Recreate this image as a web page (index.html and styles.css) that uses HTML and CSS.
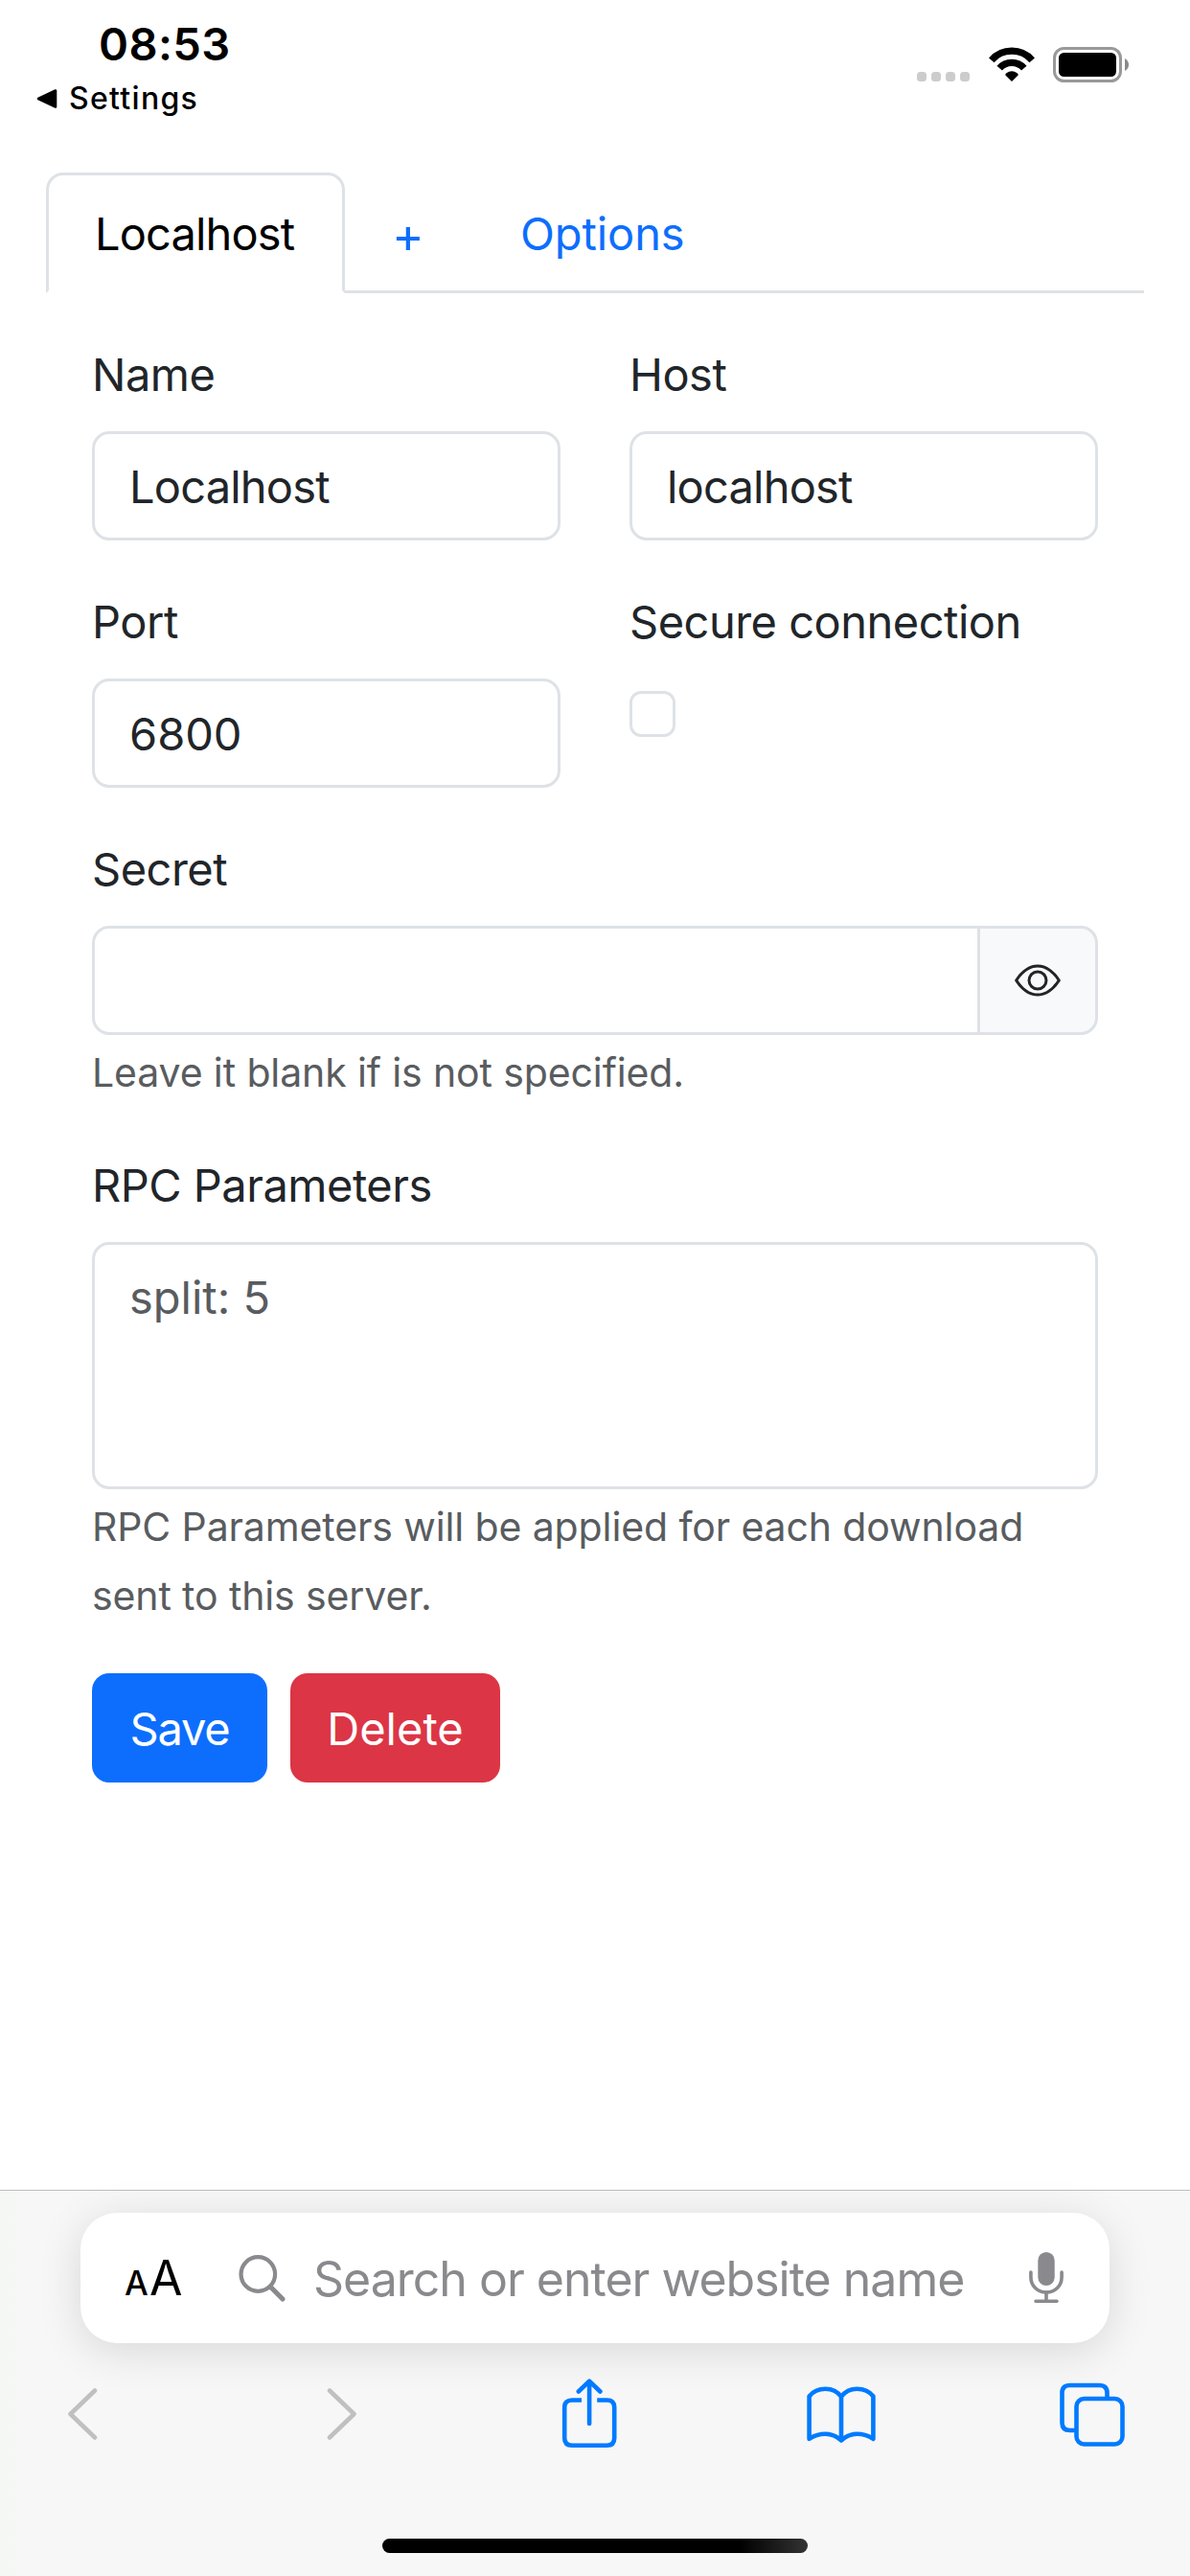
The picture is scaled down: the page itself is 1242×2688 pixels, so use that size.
FILE: index.html
```html
<!DOCTYPE html>
<html lang="en">
<head>
<meta charset="utf-8">
<title>Server options</title>
<link rel="stylesheet" href="styles.css">
</head>
<body>
<div class="screen">
  <header class="status">
    <div class="status-left">
      <div class="time">08:53</div>
      <div class="back">
        <svg class="back-arrow" viewBox="0 0 22 22"><path d="M2 11 L20 2.5 V19.5 Z" fill="#000" stroke="#000" stroke-width="2.6" stroke-linejoin="round"/></svg>
        <span>Settings</span>
      </div>
    </div>
    <div class="status-right">
      <div class="signal"><i></i><i></i><i></i><i></i></div>
      <svg class="wifi" viewBox="0 0 48 37">
        <g fill="none" stroke="#000" stroke-width="7.3">
          <path d="M2.8 13.8 A28.2 28.2 0 0 1 45.2 13.8"/>
          <path d="M11.2 22.2 A17 17 0 0 1 36.8 22.2"/>
        </g>
        <path d="M24 36 L17.2 29.2 Q17.2 28 18.4 27.2 Q24 23.4 29.6 27.2 Q30.8 28 30.8 29.2 Z"/>
      </svg>
      <svg class="battery" viewBox="0 0 80 37">
        <rect x="1.5" y="1.5" width="69" height="34" rx="10" fill="none" stroke="#999" stroke-width="3"/>
        <rect x="6" y="6" width="60" height="25" rx="5.5"/>
        <path d="M75 12 Q79 14.5 79 18.5 Q79 22.5 75 25 Z" fill="#8a8a8a"/>
      </svg>
    </div>
  </header>

  <main class="page">
    <nav class="tabs">
      <a class="tab active">Localhost</a>
      <a class="tab plus">+</a>
      <a class="tab options">Options</a>
    </nav>

    <form class="form">
      <div class="row">
        <div class="field">
          <label>Name</label>
          <div class="input tight">Localhost</div>
        </div>
        <div class="field">
          <label>Host</label>
          <div class="input tight">localhost</div>
        </div>
      </div>
      <div class="row">
        <div class="field">
          <label>Port</label>
          <div class="input digits">6800</div>
        </div>
        <div class="field">
          <label>Secure connection</label>
          <div class="check"></div>
        </div>
      </div>
      <div class="field">
        <label>Secret</label>
        <div class="group">
          <div class="input"></div>
          <div class="eye">
            <svg viewBox="0 0 16 16" fill="#212529"><path d="M16 8s-3-5.500-8-5.500S0 8 0 8s3 5.500 8 5.500S16 8 16 8M1.173 8a13 13 0 0 1 1.660-2.043C4.120 4.668 5.880 3.500 8 3.500s3.879 1.168 5.168 2.457A13 13 0 0 1 14.828 8q-.086.130-.195.288c-.335.480-.830 1.120-1.465 1.755C11.879 11.332 10.119 12.500 8 12.500s-3.879-1.168-5.168-2.457A13 13 0 0 1 1.172 8z"/><path d="M8 5.500a2.500 2.500 0 1 0 0 5 2.500 2.500 0 0 0 0-5M4.500 8a3.500 3.500 0 1 1 7 0 3.500 3.500 0 0 1-7 0"/></svg>
          </div>
        </div>
        <div class="help">Leave it blank if is not specified.</div>
      </div>
      <div class="field">
        <label>RPC Parameters</label>
        <div class="input area">split: 5</div>
        <div class="help">RPC Parameters will be applied for each download<br>sent to this server.</div>
      </div>
      <div class="buttons">
        <div class="btn save">Save</div>
        <div class="btn delete">Delete</div>
      </div>
    </form>
  </main>

  <footer class="browser">
    <div class="address">
      <div class="aa"><span class="aa-small">A</span><span class="aa-big">A</span></div>
      <svg class="glass" viewBox="0 0 50 50"><g fill="none" stroke="#8a8a8e" stroke-linecap="round"><circle cx="20.3" cy="20" r="17.8" stroke-width="4.2"/><path d="M33.500 33.500 L46 46" stroke-width="5.200"/></g></svg>
      <span class="hint">Search or enter website name</span>
      <svg class="mic" viewBox="0 0 36 54"><rect x="9.3" y="0" width="17.4" height="35" rx="8.7" fill="#8a8a8e"/><g fill="none" stroke="#8a8a8e" stroke-width="3.6" stroke-linecap="round"><path d="M1.900 21 V26 C1.900 35.500 9 42 18 42 C27 42 34.100 35.500 34.100 26 V21"/><path d="M18 42 V51 M7 51.200 H29"/></g></svg>
    </div>
    <div class="tools">
      <svg class="t-back" viewBox="0 0 32 56"><path d="M29 3.5 L3.5 28 L29 52.5"/></svg>
      <svg class="t-fwd" viewBox="0 0 32 56"><path d="M3 3.5 L28.5 28 L3 52.5"/></svg>
      <svg class="t-share" viewBox="0 0 58 74"><path class="butt" d="M21 22.500 H11 Q3.200 22.500 3.200 30 V62 Q3.200 69.700 11 69.700 H47.500 Q55.200 69.700 55.200 62 V30 Q55.200 22.500 47.500 22.500 H37.200"/><path d="M29.100 47 V3 M17.800 13.500 L29.100 2.600 L40.400 13.500"/></svg>
      <svg class="t-book" viewBox="0 0 72 62"><path d="M36 56.500 V11 C32 5.500 26 2.800 19.500 2.800 C13 2.800 6.500 5.500 2.600 10.500 V55 C7.500 51.500 13 49.800 19.500 49.800 C26 49.800 31 52 36 56.500 C41 52 46 49.800 52.500 49.800 C59 49.800 64.500 51.500 69.400 55 V10.500 C65.500 5.500 59 2.800 52.500 2.800 C46 2.800 40 5.500 36 11"/></svg>
      <svg class="t-tabs" viewBox="0 0 68 68"><path d="M49.500 15 V11 Q49.500 3 41.500 3 H10.500 Q2.500 3 2.500 11 V42 Q2.500 50 10.500 50 H15"/><rect x="17.500" y="17" width="48" height="47.500" rx="8"/></svg>
    </div>
    <div class="home"></div>
  </footer>
</div>
</body>
</html>
```
FILE: styles.css
```css
* { box-sizing: border-box; }

body {
  margin: 0;
  background: #fff;
  color: #212529;
  font: 47px/72px Inter, "Liberation Sans", sans-serif;
  letter-spacing: -0.5px;
}

svg { display: block; flex: none; }

.screen {
  display: flex;
  flex-direction: column;
  width: 1242px;
  height: 2688px;
  overflow: hidden;
}

/* Status bar */
.status {
  display: flex;
  justify-content: space-between;
  height: 180px;
  color: #000;
}
.status-left { padding: 20px 0 0 38px; }
.time {
  padding-left: 65px;
  font-weight: 600;
  line-height: 52px;
  letter-spacing: 0.4px;
}
.back {
  display: flex;
  align-items: center;
  gap: 12px;
  margin-top: 11px;
  font-size: 32px;
  font-weight: 500;
  line-height: 40px;
  letter-spacing: 1.3px;
}
.back-arrow { width: 22px; height: 22px; }
.status-right {
  display: flex;
  align-items: flex-start;
  padding: 49px 63px 0 0;
}
.signal { display: flex; gap: 5px; padding-top: 26px; margin-right: 20px; }
.signal i { width: 10px; height: 10px; border-radius: 3.5px; background: #ccc; }
.wifi { width: 48px; height: 37px; margin-right: 19px; }
.battery { width: 80px; height: 37px; }

/* Tabs */
.page { flex: 1; padding: 0 48px; }
.tabs {
  display: flex;
  height: 126px;
  border-bottom: 3px solid #dee2e6;
}
.tab {
  height: 126px;
  padding: 25px 48px 0;
  border: 3px solid transparent;
  border-radius: 18px 18px 0 0;
  color: #0d6efd;
}
.tab.active {
  width: 312px;
  border-color: #dee2e6 #dee2e6 #fff;
  background: #fff;
  color: #000;
  letter-spacing: -0.85px;
}
.tab.plus { width: 132px; padding: 27px 0 0 46px; font-size: 51px; }
.tab.options { letter-spacing: -0.1px; }

/* Form */
.form { display: flex; flex-direction: column; gap: 48px; padding: 48px 48px 0; }
.row { display: grid; grid-template-columns: 1fr 1fr; gap: 72px; }
.field { min-width: 0; }
.field label { display: block; padding-top: 1px; margin-bottom: 23px; }
.input {
  height: 114px;
  padding: 19px 36px 0;
  border: 3px solid #dee2e6;
  border-radius: 18px;
  background: #fff;
}
.input.tight { letter-spacing: -0.8px; }
.input.digits { letter-spacing: 0; }
.input.area { height: 258px; color: #595c5f; letter-spacing: 0; }
.check {
  width: 48px;
  height: 48px;
  margin-top: 36px;
  border: 3px solid #dee2e6;
  border-radius: 12px;
}
.group { display: flex; }
.group .input { flex: 1; border-radius: 18px 0 0 18px; }
.eye {
  width: 126px;
  height: 114px;
  margin-left: -3px;
  padding: 30px 36px;
  border: 3px solid #dee2e6;
  border-radius: 0 18px 18px 0;
  background: #f8f9fa;
}
.eye svg { width: 48px; height: 48px; }
.help {
  padding-top: 3px;
  margin-bottom: -3px;
  color: #595c5f;
  font-size: 41px;
  letter-spacing: -0.12px;
}
.buttons { display: flex; gap: 24px; }
.btn {
  height: 114px;
  padding-top: 22px;
  border-radius: 18px;
  color: #fff;
  text-align: center;
}
.save { width: 183px; background: #0d6efd; letter-spacing: -1.2px; }
.delete { width: 219px; background: #dc3545; letter-spacing: 0; }

/* Browser toolbar */
.browser {
  display: flex;
  flex-direction: column;
  height: 403px;
  border-top: 1px solid #bcbebc;
  background: linear-gradient(90deg, #f5f7f5 0, #f7f7f7 60px, #f7f7f7 100%);
}
.address {
  display: flex;
  align-items: center;
  width: 1074px;
  height: 136px;
  margin: 23px 0 0 84px;
  padding: 0 48px 0 46px;
  border-radius: 38px;
  background: #fff;
  box-shadow: 0 8px 45px rgba(0, 0, 0, 0.13);
}
.aa {
  display: flex;
  align-items: baseline;
  width: 119px;
  padding-top: 4px;
  color: #000;
  letter-spacing: 0;
}
.aa-small { width: 26px; font-size: 35px; font-weight: 500; }
.aa-big { font-size: 50px; }
.glass { width: 50px; height: 50px; margin-top: 2px; }
.hint {
  flex: 1;
  padding-top: 2px;
  margin-left: 28px;
  color: #8a8a8e;
  font-size: 50px;
  letter-spacing: -1px;
  white-space: nowrap;
}
.mic { width: 36px; height: 54px; }

.tools {
  display: flex;
  align-items: center;
  height: 74px;
  margin: 37px 0 0 70px;
}
.tools svg {
  fill: none;
  stroke: #007aff;
  stroke-width: 4.6;
  stroke-linecap: round;
  stroke-linejoin: round;
}
.tools .butt { stroke-linecap: butt; }
.tools .t-back, .tools .t-fwd { width: 32px; height: 56px; stroke: #c0c0c0; }
.t-fwd { margin-left: 239px; }
.t-share { width: 58px; height: 74px; margin-left: 213px; }
.t-book { width: 72px; height: 62px; margin: 3px 0 0 198px; }
.t-tabs { width: 68px; height: 68px; margin: 1px 0 0 192px; }
.home {
  width: 444px;
  height: 15px;
  margin: 93px auto 0;
  border-radius: 8px;
  background: linear-gradient(90deg, #000 84%, #333 100%);
}
```
